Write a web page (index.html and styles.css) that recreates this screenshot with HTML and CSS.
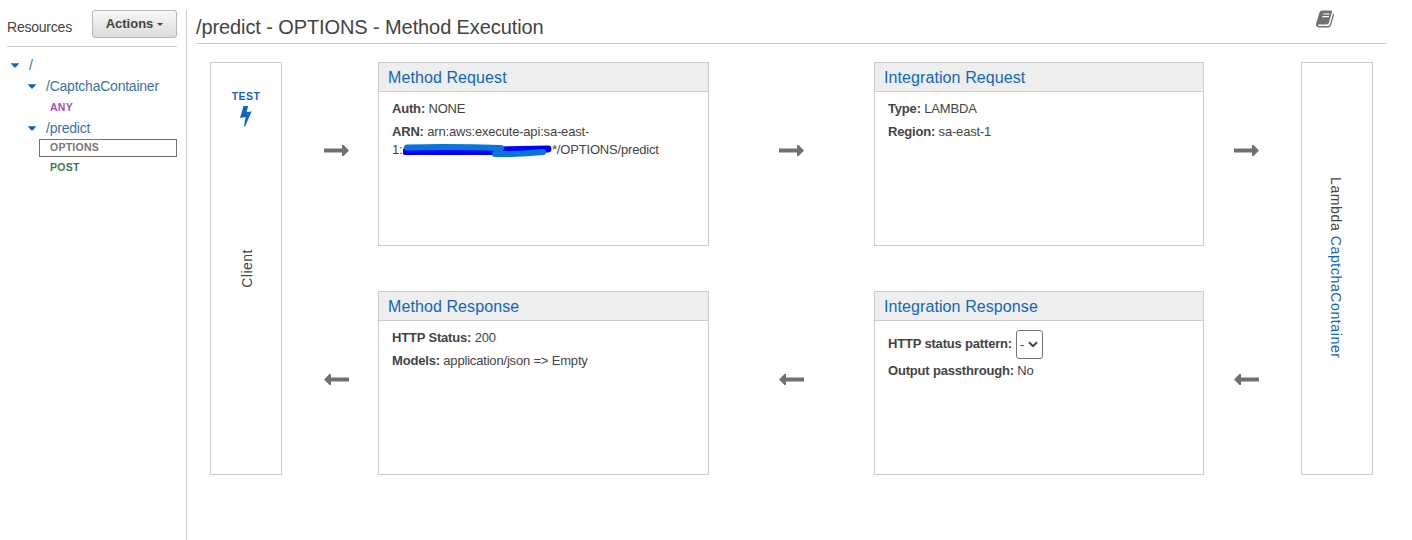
FILE: index.html
```html
<!DOCTYPE html>
<html lang="en">
<head>
<meta charset="utf-8">
<title>Method Execution</title>
<link rel="stylesheet" href="styles.css">
</head>
<body>
<svg class="defs" width="0" height="0">
  <symbol id="arrow" viewBox="0 0 25 11"><path d="M0 3.500h18V0h1.500L25 5.500 19.500 11H18V7.500H0z"/></symbol>
  <symbol id="caret" viewBox="0 0 9 5"><path d="M0 0h9v.6L5.200 4.700H3.800L0 .6z"/></symbol>
</svg>
<div class="app">
  <aside class="sidebar">
    <div class="sidebar-head">
      <span class="sidebar-title">Resources</span>
      <button class="actions">Actions <i class="caret-small"></i></button>
    </div>
    <nav class="tree">
      <a class="node root"><svg class="caret"><use href="#caret"/></svg>/</a>
      <a class="node child"><svg class="caret"><use href="#caret"/></svg>/CaptchaContainer</a>
      <a class="method any">ANY</a>
      <a class="node child"><svg class="caret"><use href="#caret"/></svg>/predict</a>
      <a class="method options">OPTIONS</a>
      <a class="method post">POST</a>
    </nav>
  </aside>
  <main class="main">
    <header class="main-head">
      <h1 class="title">/predict - OPTIONS - Method Execution</h1>
      <svg class="book" viewBox="0 0 20 18"><path class="ink" d="M6.600 0H15.400q2 0 1.400 1.900L13.600 13q-.5 1.700-2.500 1.700H3.200q-1.300 0-1.200.9.100.8 1.300.8H13q1.100 0 1.500-1.200L18 3.300q1.300.5.900 1.900l-3.200 10.600Q15 17.900 13 17.900H3Q.8 17.900.2 16q-.4-1.200.1-2.500L3.700 2Q4.500 0 6.600 0z"/><path class="page-line" d="M7.500 3.700h7M6.700 6.500h7"/></svg>
    </header>
    <div class="flow">
      <section class="endpoint client">
        <a class="test">TEST
          <svg class="bolt" viewBox="0 0 12 21"><path d="M3.500 0H8.200L6.600 6.300 11.700 5.300 5 20.500 4 20.300 5.600 10.900 0 12.100z"/></svg>
        </a>
        <span class="vertical up">Client</span>
      </section>
      <div class="link near-card"><svg class="arrow"><use href="#arrow"/></svg></div>
      <section class="card">
        <h2 class="card-title">Method Request</h2>
        <div class="card-body">
          <p><b>Auth:</b> NONE</p>
          <p><b>ARN:</b> arn:aws:execute-api:sa-east-<br>1:<svg class="redaction" viewBox="0 0 149 13"><path class="deep" d="M3 7.500 145 5"/><path class="deep" d="M3 7.500H138"/><path class="bright" d="M4 3.500Q50 2.500 98 4"/><path class="bright" d="M92 10Q116 10.500 140 8"/></svg>*/OPTIONS/predict</p>
        </div>
      </section>
      <div class="link"><svg class="arrow"><use href="#arrow"/></svg></div>
      <section class="card">
        <h2 class="card-title">Integration Request</h2>
        <div class="card-body">
          <p><b>Type:</b> LAMBDA</p>
          <p><b>Region:</b> sa-east-1</p>
        </div>
      </section>
      <div class="link after-card"><svg class="arrow"><use href="#arrow"/></svg></div>
      <section class="endpoint lambda">
        <span class="vertical">Lambda <a class="fn">CaptchaContainer</a></span>
      </section>
      <div class="link back near-card"><svg class="arrow"><use href="#arrow"/></svg></div>
      <section class="card">
        <h2 class="card-title">Method Response</h2>
        <div class="card-body">
          <p><b>HTTP Status:</b> 200</p>
          <p><b>Models:</b> application/json =&gt; Empty</p>
        </div>
      </section>
      <div class="link back"><svg class="arrow"><use href="#arrow"/></svg></div>
      <section class="card">
        <h2 class="card-title">Integration Response</h2>
        <div class="card-body">
          <p class="pattern"><b>HTTP status pattern:</b> <span class="select">-<svg class="chevron" viewBox="0 0 10 7"><path d="M1 1.200 5 5.200 9 1.200"/></svg></span></p>
          <p><b>Output passthrough:</b> No</p>
        </div>
      </section>
      <div class="link back after-card"><svg class="arrow"><use href="#arrow"/></svg></div>
    </div>
  </main>
</div>
</body>
</html>
```
FILE: styles.css
```css
* { box-sizing: border-box; }
body { margin: 0; background: #fff; color: #444; font-family: "Liberation Sans", Arial, sans-serif; font-size: 13px; line-height: 18px; }
h1, h2, p { margin: 0; font-weight: normal; }
.defs { display: block; }
.app { display: flex; height: 540px; padding-top: 10px; overflow: hidden; }

.sidebar { width: 187px; padding: 0 9px 0 7px; border-right: 1px solid #ccc; }
.sidebar-head { display: flex; justify-content: space-between; height: 37px; border-bottom: 1px solid #ccc; }
.sidebar-title { padding-top: 8px; font-size: 14px; letter-spacing: -.22px; }
.actions { display: flex; justify-content: center; align-items: center; gap: 4px; width: 85px; height: 28px; padding: 0 0 1px; border: 1px solid #b8b8b8; border-radius: 3px; background: linear-gradient(#f7f7f7, #dcdcdc); color: #444; font: bold 13px "Liberation Sans", Arial, sans-serif; }
.caret-small { margin-top: 2px; border: 3px solid transparent; border-top-color: #444; border-bottom: 0; }

.tree { display: flex; flex-direction: column; padding-top: 7px; }
.node { display: flex; align-items: center; height: 21px; color: #3c73a8; font-size: 14px; letter-spacing: -.23px; }
.root { padding-left: 4px; }
.child { padding-left: 21px; }
.caret { width: 8px; height: 5px; margin: 1px 10px 0 0; fill: #1166bb; }
.method { height: 20px; padding-left: 43px; font-size: 10.5px; font-weight: bold; line-height: 20px; letter-spacing: .25px; }
.any { height: 21px; color: #a44fb8; line-height: 22px; }
.options { height: 18px; margin: 1px 0 0 32px; padding-left: 10px; border: 1px solid #777; color: #777; line-height: 15px; }
.post { height: 22px; color: #3c7a4c; line-height: 21px; }

.main { width: 1199px; padding-left: 9px; }
.main-head { display: flex; justify-content: space-between; height: 34px; padding-right: 51px; border-bottom: 1px solid #ccc; }
.title { padding-top: 5px; font-size: 20px; line-height: 24px; letter-spacing: -.1px; }
.book { width: 19px; height: 18px; }
.ink { fill: #707070; }
.page-line { fill: none; stroke: #fff; stroke-width: 1.2; }

.flow { display: grid; grid-template-columns: 72px 96px 331px 165px 330px 97px 72px; grid-template-rows: 184px 184px; row-gap: 45px; padding: 18px 0 0 14px; }
.endpoint { display: flex; flex-direction: column; align-items: center; grid-row: 1 / 3; border: 1px solid #ccc; }
.client { grid-column: 1; }
.lambda { grid-column: 7; padding: 114px 3px 0 0; }
.test { display: flex; flex-direction: column; align-items: center; gap: 1px; padding-top: 24px; color: #1166bb; font-size: 10.5px; font-weight: bold; letter-spacing: .4px; }
.bolt { width: 12px; height: 21px; fill: #1166bb; }
.vertical { writing-mode: vertical-rl; font-size: 14px; letter-spacing: .62px; white-space: nowrap; }
.up { margin: 122px 0 0 1px; letter-spacing: .5px; transform: rotate(180deg); }
.fn { color: #1166bb; }
.link { display: flex; align-items: center; justify-content: center; padding-bottom: 7px; }
.near-card { padding-left: 12px; }
.after-card { padding-right: 13px; }
.arrow { width: 25px; height: 11px; fill: #707070; }
.back .arrow { transform: scaleX(-1); }

.card { border: 1px solid #ccc; }
.card-title { height: 29px; padding-left: 9px; border-bottom: 1px solid #ccc; background: #eee; color: #1166bb; font-size: 16px; line-height: 29px; letter-spacing: .09px; }
.card-body { display: flex; flex-direction: column; gap: 5px; padding: 8px 13px 0; letter-spacing: -.18px; }
.redaction { width: 149px; height: 13px; margin: 0 0 0 .5px; vertical-align: -3px; fill: none; stroke-linecap: round; }
.deep { stroke: #0000ff; stroke-width: 7; }
.bright { stroke: #0875d8; stroke-width: 6; }
.pattern { display: flex; align-items: center; gap: 4px; height: 29px; margin: 1px 0 -2px; }
.pattern b { padding-bottom: 2px; }
.select { display: flex; align-items: center; gap: 4px; width: 27px; height: 29px; padding-left: 3px; border: 1px solid #777; border-radius: 3px; }
.chevron { width: 10px; height: 7px; fill: none; stroke: #444; stroke-width: 2; }
```
